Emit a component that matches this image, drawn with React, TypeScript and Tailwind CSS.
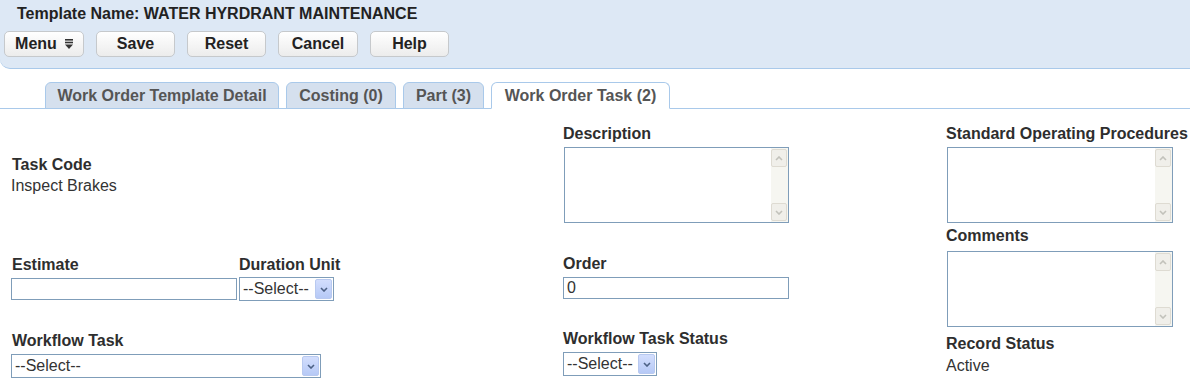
import React from 'react';

const Chevron = ({ up = false, color = '#4d6185' }: { up?: boolean; color?: string }) => (
  <svg width="8" height="5" viewBox="0 0 8 5" className={up ? 'rotate-180' : ''}>
    <path d="M1 1 L4 4 L7 1" fill="none" stroke={color} strokeWidth="1.6" />
  </svg>
);

const ToolButton = ({ label, width, menu = false }: { label: string; width: string; menu?: boolean }) => (
  <div
    className={`${width} h-[26px] flex items-center justify-center gap-[8px] rounded-[5px] border border-[#c6c9cc] bg-linear-to-b from-white to-[#ececec] font-bold text-[#222]`}
  >
    <span>{label}</span>
    {menu && (
      <svg width="8" height="10" viewBox="0 0 8 10">
        <rect x="0" y="0" width="8" height="1.6" fill="#333" />
        <rect x="0" y="2.7" width="8" height="1.6" fill="#333" />
        <polygon points="0,5.4 8,5.4 4,10" fill="#333" />
      </svg>
    )}
  </div>
);

const Tab = ({ label, width, active = false }: { label: string; width: string; active?: boolean }) => (
  <div
    className={`${width} h-[27px] -mb-px flex items-center justify-center rounded-t-[6px] border border-[#a9c9ea] font-bold text-[#555] ${
      active ? 'bg-white border-b-white' : 'bg-[#d5e0ee]'
    }`}
  >
    {label}
  </div>
);

// fake textarea with the old windows style scroll bar
const TextBox = ({ width }: { width: string }) => (
  <div className={`${width} h-[76px] flex border border-[#7f9db9] bg-white`}>
    <div className="flex-1" />
    <div className="w-[17px] flex flex-col justify-between bg-[#f6f6f1] py-px pr-px">
      <div className="h-[18px] flex items-center justify-center rounded-[2px] border border-[#dedbd2] bg-[#f0efea]">
        <Chevron up color="#c2c2bb" />
      </div>
      <div className="h-[18px] flex items-center justify-center rounded-[2px] border border-[#dedbd2] bg-[#f0efea]">
        <Chevron color="#c2c2bb" />
      </div>
    </div>
  </div>
);

const SelectBox = ({ width }: { width: string }) => (
  <div className={`${width} h-[24px] flex items-center border border-[#7f9db9] bg-white pl-[3px] pr-px`}>
    <span className="flex-1 leading-4">--Select--</span>
    <div className="w-[17px] h-[20px] flex items-center justify-center rounded-[2px] border border-[#b8c9f0] bg-linear-to-b from-[#d3defd] to-[#b6c9f6]">
      <Chevron />
    </div>
  </div>
);

const Label = ({ children }: { children: React.ReactNode }) => (
  <div className="font-bold leading-[18px] text-[#2e2e2e]">{children}</div>
);

export default function App() {
  return (
    <div className="w-[1190px] h-[389px] overflow-hidden bg-white font-['Liberation_Sans',Arial,sans-serif] text-[16px] text-[#333]">
      {/* header */}
      <div className="h-[69px] pt-[5px] pl-[4px] bg-[#dde8f5] border-b border-[#a9c9ea] rounded-bl-[10px]">
        <div className="ml-[13px] font-bold leading-[18px] text-[#222]">Template Name: WATER HYRDRANT MAINTENANCE</div>
        <div className="flex gap-[12px] mt-[8px]">
          <ToolButton label="Menu" width="w-[80px]" menu />
          <ToolButton label="Save" width="w-[79px]" />
          <ToolButton label="Reset" width="w-[79px]" />
          <ToolButton label="Cancel" width="w-[80px]" />
          <ToolButton label="Help" width="w-[79px]" />
        </div>
      </div>

      {/* tabs */}
      <div className="h-[40px] flex items-end gap-[7px] pl-[45px] border-b border-[#a9c9ea]">
        <Tab label="Work Order Template Detail" width="w-[234px]" />
        <Tab label="Costing (0)" width="w-[110px]" />
        <Tab label="Part (3)" width="w-[81px]" />
        <Tab label="Work Order Task (2)" width="w-[179px]" active />
      </div>

      {/* form */}
      <div className="flex">
        <div className="w-[563px] pl-[11px]">
          <div className="mt-[47px] pl-px">
            <Label>Task Code</Label>
          </div>
          <div className="mt-[3px] leading-[18px]">Inspect Brakes</div>
          <div className="flex mt-[61px]">
            <div className="w-[228px]">
              <div className="pl-px">
                <Label>Estimate</Label>
              </div>
              <div className="mt-[4px] w-[226px] h-[22px] border border-[#7f9db9]" />
            </div>
            <div>
              <Label>Duration Unit</Label>
              <div className="mt-[3px]">
                <SelectBox width="w-[95px]" />
              </div>
            </div>
          </div>
          <div className="mt-[31px] pl-px">
            <Label>Workflow Task</Label>
          </div>
          <div className="mt-[4px]">
            <SelectBox width="w-[310px]" />
          </div>
        </div>

        <div className="w-[383px]">
          <div className="mt-[16px]">
            <Label>Description</Label>
          </div>
          <div className="mt-[4px] ml-px">
            <TextBox width="w-[225px]" />
          </div>
          <div className="mt-[32px]">
            <Label>Order</Label>
          </div>
          <div className="mt-[4px] w-[226px] h-[22px] flex items-center pl-[3px] border border-[#7f9db9] leading-4">0</div>
          <div className="mt-[31px]">
            <Label>Workflow Task Status</Label>
          </div>
          <div className="mt-[4px]">
            <SelectBox width="w-[94px]" />
          </div>
        </div>

        <div className="flex-1">
          <div className="mt-[16px]">
            <Label>Standard Operating Procedures</Label>
          </div>
          <div className="mt-[4px] ml-px">
            <TextBox width="w-[226px]" />
          </div>
          <div className="mt-[4px]">
            <Label>Comments</Label>
          </div>
          <div className="mt-[6px] ml-px">
            <TextBox width="w-[226px]" />
          </div>
          <div className="mt-[8px]">
            <Label>Record Status</Label>
          </div>
          <div className="mt-[4px] leading-[18px]">Active</div>
        </div>
      </div>
    </div>
  );
}
